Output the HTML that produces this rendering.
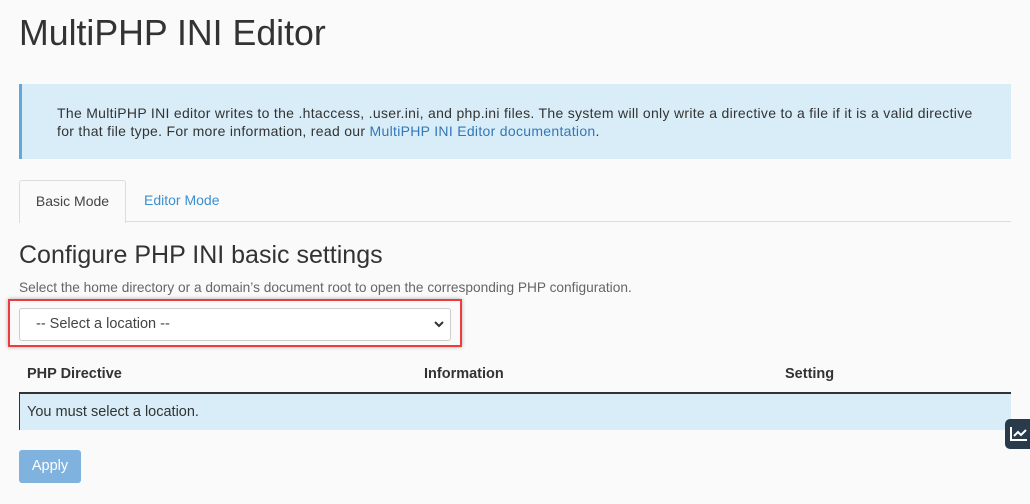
<!DOCTYPE html>
<html><head><style>
body{margin:0;width:1030px;height:504px;background:#fafafa;font-family:"Liberation Sans",sans-serif;color:#333;position:relative;overflow:hidden}
.a{position:absolute}
</style></head><body>
<div class="a" style="left:19px;top:13px;font-size:35.7px;font-weight:300;color:#333">MultiPHP INI Editor</div>
<div class="a" style="left:19px;top:84px;width:989px;height:75px;background:#d9edf8;border-left:3px solid #5fa8d8"></div>
<div class="a" style="left:57px;top:104px;width:945px;font-size:14px;line-height:18px;color:#333;letter-spacing:0.3px">The MultiPHP INI editor writes to the .htaccess, .user.ini, and php.ini files. The system will only write a directive to a file if it is a valid directive<br>for that file type. For more information, read our <span style="color:#3377b7">MultiPHP INI Editor documentation</span>.</div>
<div class="a" style="left:19px;top:221px;width:992px;height:1px;background:#ddd"></div>
<div class="a" style="left:19px;top:180px;width:105px;height:42px;background:#fafafa;border:1px solid #ddd;border-bottom:none;border-radius:3px 3px 0 0;font-size:14px;line-height:41px;text-align:center;color:#444">Basic Mode</div>
<div class="a" style="left:144px;top:192px;font-size:14px;color:#3d8fd0">Editor Mode</div>
<div class="a" style="left:19px;top:241px;font-size:25px;color:#333">Configure PHP INI basic settings</div>
<div class="a" style="left:19px;top:280px;font-size:13.7px;color:#666">Select the home directory or a domain’s document root to open the corresponding PHP configuration.</div>
<div class="a" style="left:8px;top:299px;width:450px;height:44px;border:2px solid #ee3b3b;box-shadow:0 0 4px rgba(0,0,0,.3)"></div>
<div class="a" style="left:19px;top:308px;width:430px;height:31px;background:#fff;border:1px solid #ccc;border-radius:3px;font-size:14.5px;line-height:31px;color:#444"><span style="margin-left:16px">-- Select a location --</span>
<svg class="a" style="right:6px;top:12px" width="10" height="7" viewBox="0 0 10 7"><path d="M1 1l4 4 4-4" stroke="#333" stroke-width="2" fill="none"/></svg></div>
<div class="a" style="left:27px;top:366px;font-size:14.5px;font-weight:bold">PHP Directive</div>
<div class="a" style="left:424px;top:366px;font-size:14.5px;font-weight:bold">Information</div>
<div class="a" style="left:785px;top:366px;font-size:14.5px;font-weight:bold">Setting</div>
<div class="a" style="left:19px;top:392px;width:992px;height:2px;background:#333"></div>
<div class="a" style="left:19px;top:394px;width:991px;height:36px;background:#d9edf8;border-left:1px solid #333;font-size:14.5px;line-height:36px"><span style="margin-left:7px">You must select a location.</span></div>
<div class="a" style="left:19px;top:450px;width:62px;height:33px;background:#7fb2de;border-radius:3px;color:#fff;font-size:14.5px;line-height:33px;text-align:center">Apply</div>
<div class="a" style="left:1005px;top:419px;width:30px;height:30px;background:#293a4a;border-radius:5px"><svg class="a" style="left:5px;top:7px" width="18" height="16" viewBox="0 0 18 16"><path d="M1 1v13h16M4 10l4-4 3 3 5-5" stroke="#fff" stroke-width="2" fill="none"/></svg></div>
</body></html>
